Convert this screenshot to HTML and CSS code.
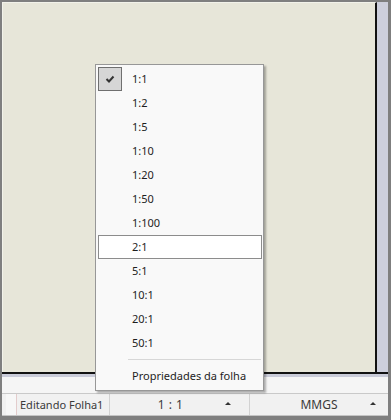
FILE: index.html
```html
<!DOCTYPE html>
<html lang="pt">

<head>
  <meta charset="UTF-8" />
  <title>Escala da folha</title>
  <link rel="stylesheet" href="styles.css">
</head>

<body>
  <div class="window">
    <!-- área da folha -->
    <div class="sheet">
      <div class="canvas"></div>
      <div class="vscroll"></div>
    </div>
    <div class="hscroll"></div>
    <div class="spacer"></div>
    <!-- barra de status -->
    <div class="status">
      <div class="grip"></div>
      <div class="cell cell-edit">Editando Folha1</div>
      <div class="cell cell-scale">
        <span class="value">1 : 1</span>
        <span class="arrow"></span>
      </div>
      <div class="cell cell-units">
        <span class="value">MMGS</span>
        <span class="arrow"></span>
      </div>
    </div>
  </div>

  <!-- menu de escalas -->
  <ul class="menu">
    <li class="item checked">
      <span class="check">
        <svg width="10" height="8" viewBox="0 0 10 8">
          <path d="M1.5 4 L4 6.5 L8.5 1.5" fill="none" stroke="#333" stroke-width="2" />
        </svg>
      </span>
      1:1
    </li>
    <li class="item">1:2</li>
    <li class="item">1:5</li>
    <li class="item">1:10</li>
    <li class="item">1:20</li>
    <li class="item">1:50</li>
    <li class="item">1:100</li>
    <li class="item hover">2:1</li>
    <li class="item">5:1</li>
    <li class="item">10:1</li>
    <li class="item">20:1</li>
    <li class="item">50:1</li>
    <li class="sep"></li>
    <li class="item">Propriedades da folha</li>
  </ul>
</body>

</html>
```

FILE: styles.css
```css
* {
  margin: 0;
  padding: 0;
  box-sizing: border-box;
}

ul {
  list-style: none;
}

body {
  width: 391px;
  height: 420px;
  overflow: hidden;
  font: 11px "Noto Sans", "Liberation Sans", sans-serif;
  color: #1e1e1e;
  background: #7f7f7f;
}

.window {
  display: flex;
  flex-direction: column;
  width: 391px;
  height: 420px;
  padding: 2px 3px 4px 2px;
}

.sheet {
  display: flex;
  flex-shrink: 0;
  height: 372px;
  border-bottom: 2px solid #111;
}

.canvas {
  flex: 1;
  background: #e7e6d9;
  border-top: 1px solid #f2f2ea;
  border-left: 1px solid #f2f2ea;
  border-right: 2px solid #111;
}

.vscroll {
  width: 11px;
  background: #cdcfdc;
}

.hscroll {
  flex-shrink: 0;
  height: 3px;
  background: #c9cbd8;
}

.spacer {
  flex-shrink: 0;
  height: 17px;
  background: #f5f5f5;
  border-bottom: 1px solid #c9c9c9;
}

.status {
  flex: 1;
  display: flex;
  white-space: nowrap;
  background: #f1f1f1;
  border-bottom: 1px solid #c4c4c4;
  color: #3a3a3a;
}

.grip {
  width: 15px;
  border-left: 4px solid #f1f1f1;
  border-right: 1px solid #e3cccc;
  background: #f7f7f7;
}

.cell {
  display: flex;
  align-items: center;
  border-right: 1px solid #d2d2d2;
}

.cell-edit {
  width: 93px;
  padding-left: 3px;
}

.cell-scale {
  width: 140px;
  justify-content: center;
  position: relative;
}

.cell-units {
  flex: 1;
  border-right: none;
  justify-content: center;
  position: relative;
}

.cell-scale .value {
  margin-left: -18px;
  letter-spacing: 0.5px;
  font-size: 12px;
}

.cell-units .value {
  margin-left: 0;
  font-size: 12px;
}

.arrow {
  position: absolute;
  top: 8px;
  width: 0;
  height: 0;
  border-left: 3px solid transparent;
  border-right: 3px solid transparent;
  border-bottom: 3px solid #333;
}

.cell-scale .arrow {
  right: 18px;
}

.cell-units .arrow {
  right: 12px;
}

/* menu */
.menu {
  position: absolute;
  left: 95px;
  top: 64px;
  width: 169px;
  padding: 2px 1px 2px 2px;
  background: #f9f9f9;
  border: 1px solid #979797;
  box-shadow: 2px 2px 2px rgba(0, 0, 0, 0.3);
}

.item {
  position: relative;
  height: 24px;
  line-height: 22px;
  padding-left: 33px;
  border: 1px solid transparent;
}

.item.hover {
  background: #fff;
  border-color: #8c8c8c;
}

.check {
  position: absolute;
  left: -1px;
  top: -1px;
  width: 24px;
  height: 24px;
  display: flex;
  align-items: center;
  justify-content: center;
  background: #d6d6d6;
  border: 1px solid #6f6f6f;
}

.sep {
  height: 1px;
  margin: 4px 1px 4px 30px;
  background: #d7d7d7;
}
```
